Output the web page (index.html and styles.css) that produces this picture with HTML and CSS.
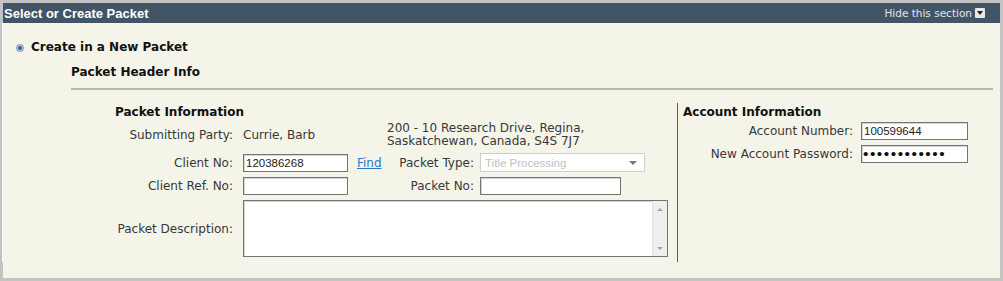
FILE: index.html
```html
<!DOCTYPE html>
<html lang="en">
<head>
    <meta charset="UTF-8">
    <title>Select or Create Packet</title>
    <link rel="stylesheet" href="styles.css">
</head>
<body>
<div class="panel">
    <div class="panel-head">
        <span class="panel-title">Select or Create Packet</span>
        <a class="toggle" href="#">Hide this section <span class="toggle-icon"></span></a>
    </div>
    <div class="panel-body">
        <label class="choice"><input class="radio" type="radio" name="packet" checked> Create in a New Packet</label>
        <h3 class="subhead">Packet Header Info</h3>
        <hr class="rule">
        <div class="columns">
            <div class="packet-info">
                <h4>Packet Information</h4>
                <div class="packet-grid">
                    <span class="lbl">Submitting Party:</span>
                    <span class="val">Currie, Barb</span>
                    <span class="address">200 - 10 Research Drive, Regina,<br>Saskatchewan, Canada, S4S 7J7</span>

                    <span class="lbl">Client No:</span>
                    <input class="field" type="text" value="120386268">
                    <a class="find" href="#">Find</a>
                    <span class="lbl lbl-mid">Packet Type:</span>
                    <span class="select">
                        <select disabled><option>Title Processing</option></select>
                    </span>

                    <span class="lbl">Client Ref. No:</span>
                    <input class="field" type="text" value="">
                    <span></span>
                    <span class="lbl lbl-mid">Packet No:</span>
                    <input class="field field-packet" type="text" value="">

                    <span class="lbl">Packet Description:</span>
                    <div class="desc">
                        <textarea></textarea>
                        <div class="scrollbar"><span class="arrow-up"></span><span class="arrow-down"></span></div>
                    </div>
                </div>
            </div>
            <div class="account-info">
                <h4>Account Information</h4>
                <div class="account-grid">
                    <span class="lbl">Account Number:</span>
                    <input class="field" type="text" value="100599644">
                    <span class="lbl">New Account Password:</span>
                    <input class="field field-pass" type="password" value="abcdefghijkl">
                </div>
            </div>
        </div>
    </div>
</div>
</body>
</html>
```

FILE: styles.css
```css
html, body {
    margin: 0;
    height: 100%;
}
body {
    font-family: "DejaVu Sans", Verdana, sans-serif;
    font-size: 12px;
    color: #383838;
    background: #c4c4c4;
}
.panel {
    box-sizing: border-box;
    height: 281px;
    border: 3px solid #c3c3c3;
    background: #f4f4e9;
}
.panel-head {
    display: flex;
    justify-content: space-between;
    align-items: center;
    height: 20px;
    padding: 0 15px 0 1px;
    background: #415566;
}
.panel-title {
    font-family: "Liberation Sans", Arial, sans-serif;
    font-size: 13px;
    font-weight: bold;
    color: #fff;
}
.toggle {
    display: flex;
    align-items: center;
    gap: 3px;
    font-size: 10.5px;
    color: #e2e6e9;
    text-decoration: none;
}
.toggle-icon {
    display: flex;
    justify-content: center;
    align-items: center;
    width: 10px;
    height: 10px;
    background: #e8e8e8;
    border-radius: 1px;
}
.toggle-icon::after {
    content: "";
    border-left: 3px solid transparent;
    border-right: 3px solid transparent;
    border-top: 4px solid #222;
}
.panel-body {
    padding: 16px 7px 0 13px;
    border-left: 1px solid #fbfbf6;
    margin-left: -1px;
}
.choice {
    display: flex;
    align-items: center;
    gap: 7px;
    line-height: 16px;
    font-weight: bold;
    color: #111;
}
.radio {
    appearance: none;
    margin: 1px 0 0;
    width: 8px;
    height: 8px;
    border-radius: 50%;
    border: 1px solid #8d939b;
    box-sizing: border-box;
    background: radial-gradient(circle, #2a6fb5 0 1.8px, #c9d2dc 2.4px);
}
.subhead {
    margin: 9px 0 0 55px;
    font-size: 12px;
    line-height: 16px;
    color: #111;
}
.rule {
    margin: 8px 0 0 55px;
    height: 0;
    border: 0;
    border-top: 2px solid #b8b8b2;
}
.columns {
    display: flex;
    margin: 13px 0 0 99px;
}
h4 {
    margin: 0 0 2px;
    font-size: 12px;
    line-height: 16px;
    color: #111;
}
.packet-info {
    width: 553px;
    padding: 1px 9px 5px 0;
}
.packet-grid {
    display: grid;
    grid-template-columns: 128px 114px 30px 93px 188px;
    row-gap: 5px;
    align-items: center;
}
.lbl {
    text-align: right;
    padding-right: 10px;
    white-space: nowrap;
}
.lbl-mid {
    padding-right: 6px;
}
.address {
    grid-column: 4 / 6;
    line-height: 13px;
}
.find {
    color: #2a79cf;
}
.field {
    box-sizing: border-box;
    width: 105px;
    height: 18px;
    margin: 0;
    padding: 1px 2px;
    border: 1px solid #747474;
    box-shadow: inset 1px 1px 0 #d6d6d6;
    background: #fff;
    font-family: "Liberation Sans", Arial, sans-serif;
    font-size: 11.5px;
    color: #222;
}
.field-packet {
    width: 141px;
}
.field-pass {
    padding: 0 1px;
    font-size: 15.5px;
    letter-spacing: 1.5px;
    color: #111;
}
.select {
    position: relative;
    display: block;
    box-sizing: border-box;
    width: 165px;
    height: 19px;
    border: 1px solid #cfcfcf;
    background: #fff;
}
.select select {
    appearance: none;
    width: 100%;
    height: 100%;
    margin: 0;
    padding: 0 4px;
    border: 0;
    background: transparent;
    font-family: "Liberation Sans", Arial, sans-serif;
    font-size: 11.5px;
    color: #a6a6a6;
}
.select::after {
    content: "";
    position: absolute;
    right: 7px;
    top: 7px;
    border-left: 4px solid transparent;
    border-right: 4px solid transparent;
    border-top: 4px solid #777;
}
.desc {
    grid-column: 2 / 6;
    display: flex;
    box-sizing: border-box;
    height: 57px;
    border: 1px solid #747474;
    box-shadow: inset 1px 1px 0 #d6d6d6;
    background: #fff;
}
.desc textarea {
    flex: 1;
    margin: 0;
    border: 0;
    resize: none;
    background: transparent;
}
.scrollbar {
    display: flex;
    flex-direction: column;
    justify-content: space-between;
    align-items: center;
    width: 15px;
    padding: 7px 0 6px;
    box-sizing: border-box;
    background: #efefef;
    border-left: 1px solid #e2e2e2;
}
.arrow-up {
    border-left: 3px solid transparent;
    border-right: 3px solid transparent;
    border-bottom: 3px solid #a3a3a3;
}
.arrow-down {
    border-left: 3px solid transparent;
    border-right: 3px solid transparent;
    border-top: 3px solid #a3a3a3;
}
.account-info {
    border-left: 1px solid #5c5c5c;
    padding: 1px 0 0 5px;
}
.account-grid {
    display: grid;
    grid-template-columns: 178px 107px;
    row-gap: 5px;
    align-items: center;
}
.account-grid .lbl {
    padding-right: 8px;
}
.account-grid .field {
    width: 107px;
}
```
